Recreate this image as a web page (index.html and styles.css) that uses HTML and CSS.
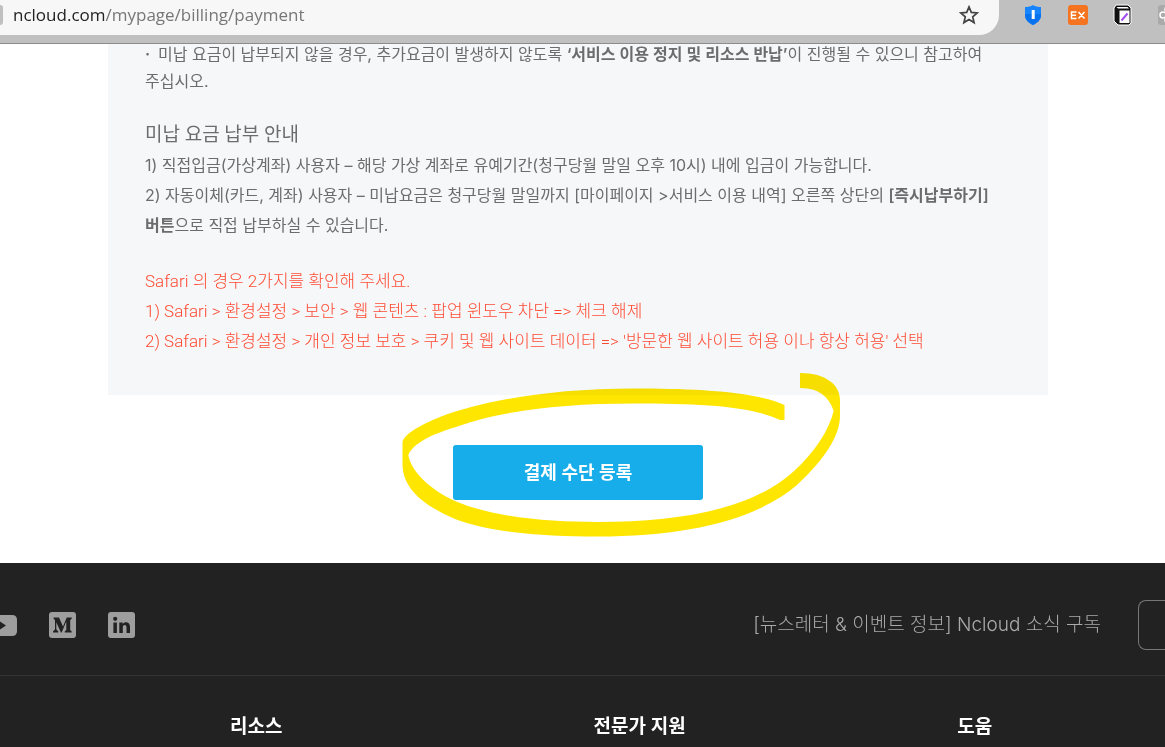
FILE: index.html
```html
<!DOCTYPE html>
<html lang="ko">
<head>
<meta charset="utf-8">
<title>결제 수단 등록</title>
<link rel="stylesheet" href="styles.css">
</head>
<body>
<header class="browser">
  <div class="address">
    <span class="site-info"></span>
    <span class="url">ncloud.com<span class="path">/mypage/billing/payment</span></span>
    <button class="tool star" aria-label="북마크">
      <svg width="20" height="20" viewBox="0 0 20 20" fill="none" stroke="#444" stroke-width="1.7"><path d="M10 1.9l2.300 5.500 5.900.5-4.500 3.900 1.400 5.800-5.100-3.100-5.100 3.100 1.400-5.800-4.500-3.900 5.900-.5z"/></svg>
    </button>
  </div>
  <nav class="extensions">
    <button class="tool" aria-label="보안 확장">
      <svg width="22" height="22" viewBox="0 0 22 22"><path d="M11 1c2 1.400 5 2 8 2v8c0 5-4 8-8 10-4-2-8-5-8-10V3c3 0 6-.6 8-2z" fill="#1683ff"/><path d="M3 10v1c0 5 4 8 8 10 4-2 8-5 8-10v-1z" fill="#0873ee"/><path d="M9.700 6h3v9h-3z" fill="#fff"/></svg>
    </button>
    <button class="tool" aria-label="EX 확장">
      <svg width="22" height="22" viewBox="0 0 22 22"><rect x="1" y="1" width="20" height="20" rx="3" fill="#f47421"/><path d="M9.500 8H4.500v6.500h5M4.500 11.200h4.500M11.500 8l6 6.500M17.500 8l-6 6.500" fill="none" stroke="#fff" stroke-width="1.500"/></svg>
    </button>
    <button class="tool" aria-label="노트 확장">
      <svg width="22" height="22" viewBox="0 0 22 22"><path d="M4 1h12l3 3v15l-2 2H6l-4-4V4z" fill="#111" stroke="#fff"/><path d="M7.500 6.500h10v12.500h-10z" fill="#fff"/><path d="M4.500 3h11l1.500 1.500H6z" fill="#fff"/><path d="M9.500 16.500l6-7" stroke="#a64df0" stroke-width="2"/></svg>
    </button>
    <button class="tool last" aria-label="확장 프로그램">
      <svg width="22" height="22" viewBox="0 0 22 22"><rect x="1" y="1" width="20" height="20" rx="3" fill="#aaa"/><g fill="none" stroke="#fff" stroke-width="1.500"><circle cx="11" cy="5.500" r="3"/><circle cx="6" cy="11" r="3"/><circle cx="11" cy="16" r="3"/><circle cx="16" cy="11" r="3"/></g></svg>
    </button>
  </nav>
</header>

<main>
  <section class="notice">
    <p class="bullet"><span class="dot">·</span>미납 요금이 납부되지 않을 경우, 추가요금이 발생하지 않도록 <b>‘서비스 이용 정지 및 리소스 반납’</b>이 진행될 수 있으니 참고하여<br>주십시오.</p>
    <h2>미납 요금 납부 안내</h2>
    <p>1) 직접입금(가상계좌) 사용자 – 해당 가상 계좌로 유예기간(청구당월 말일 오후 10시) 내에 입금이 가능합니다.</p>
    <p>2) 자동이체(카드, 계좌) 사용자 – 미납요금은 청구당월 말일까지 [마이페이지 &gt;서비스 이용 내역] 오른쪽 상단의 <b>[즉시납부하기]<br>버튼</b>으로 직접 납부하실 수 있습니다.</p>
    <div class="safari">
      <p>Safari 의 경우 2가지를 확인해 주세요.</p>
      <p>1) Safari &gt; 환경설정 &gt; 보안 &gt; 웹 콘텐츠 : 팝업 윈도우 차단 =&gt; 체크 해제</p>
      <p>2) Safari &gt; 환경설정 &gt; 개인 정보 보호 &gt; 쿠키 및 웹 사이트 데이터 =&gt; '방문한 웹 사이트 허용 이나 항상 허용' 선택</p>
    </div>
  </section>
  <section class="action">
    <div class="highlighted">
      <button class="register">결제 수단 등록</button>
      <svg class="marker" width="440" height="166" viewBox="402 373 440 166" aria-hidden="true"><path fill="#ffe600" d="M784.500 405C755 391 690 388.500 635 388.500C545 388.500 480 402 440 417C420 425 402.500 435 402.500 443V464C402.500 492 430 508 455 519C495 534 550 536.500 597 536.500C690 536.500 757 519 797 485C824 460 840 436 840 416V400C840 385 826 373 800 373V388C822 388 830 400 833.700 411C829 430 815 452 793 472C752 509 680 522 597 522C550 522 495 518 455 501C427 488 411 470 408.300 455C415 440 440 432 456.700 426.700C500 411 560 403.500 635 403.500C700 403.500 750 406 780 420H784.500Z"/></svg>
    </div>
  </section>
</main>

<footer class="footer">
  <div class="footer-top">
    <nav class="social">
      <a href="#" aria-label="YouTube"><svg width="17" height="27" viewBox="0 0 17 27"><path d="M0 3h12q5 0 5 5v11q0 5-5 5H0z" fill="#9e9e9e"/><path d="M0 9.500l6 4-6 4z" fill="#222"/></svg></a>
      <a href="#" aria-label="Medium"><svg width="27" height="27" viewBox="0 0 27 27"><rect width="27" height="26" rx="3" fill="#9e9e9e"/><path d="M4.500 5.500h5.500l4 9 3.700-9h5V6.700l-1.500 1.400v10l1.500 1.400v1h-7v-1l1.600-1.400V9.500L12.700 20.500h-.8L7.300 10.300v7l2 2.200v1H4v-1l2-2.200V8.200L4.500 6.500z" fill="#222"/></svg></a>
      <a href="#" aria-label="LinkedIn"><svg width="27" height="27" viewBox="0 0 27 27"><rect width="27" height="26" rx="3" fill="#9e9e9e"/><g fill="#222"><circle cx="7.200" cy="6.800" r="2.100"/><path d="M5.400 10.500h3.500V21H5.400zM11.300 10.500h3.400V12c2-3 7.300-2.200 7.300 2.700V21h-3.500v-5.600c0-3.300-3.700-3-3.700 0V21h-3.500z"/></g></svg></a>
    </nav>
    <span class="newsletter">[뉴스레터 &amp; 이벤트 정보] Ncloud 소식 구독</span>
    <button class="subscribe" aria-label="구독"></button>
  </div>
  <div class="footer-columns">
    <h3>리소스</h3>
    <h3>전문가 지원</h3>
    <h3>도움</h3>
  </div>
</footer>
</body>
</html>
```

FILE: styles.css
```css
* { box-sizing: border-box; }
body {
  margin: 0;
  background: #fff;
  color: #6c6c6c;
  font-family: "Inter", "Noto Sans CJK KR", sans-serif;
  font-size: 16px;
  font-weight: 400;
}
h2, h3, p { margin: 0; }
button { font: inherit; cursor: pointer; }
svg { display: block; }

.browser {
  display: flex;
  height: 44px;
  overflow: hidden;
  background: #c0c0c0;
  border-bottom: 1px solid #8c8c8c;
}
.address {
  display: flex;
  flex: 1;
  align-items: center;
  height: 35px;
  padding: 0 20px 5px 0;
  background: #f7f7f7;
  border-radius: 0 0 20px 0;
}
.site-info {
  width: 3px;
  height: 20px;
  margin-right: 10px;
  background: #c0c0c0;
  border-radius: 0 3px 3px 0;
}
.url {
  flex: 1;
  padding-bottom: 2px;
  color: #222;
  font-family: "Open Sans", "Noto Sans", sans-serif;
  font-size: 17px;
}
.path { color: #777; }
.tool { padding: 0; border: 0; background: none; }
.extensions {
  display: flex;
  gap: 23px;
  width: 166px;
  height: 30px;
  padding-left: 23px;
  overflow: hidden;
  align-items: center;
}
.extensions .tool { flex: none; }

.notice {
  display: flow-root;
  margin: 0 117px 0 108px;
  padding: 0 37px 39px;
  background: #f5f7f9;
  line-height: 30px;
  white-space: nowrap;
}
.bullet { margin-top: -3px; line-height: 27px; }
.bullet + h2 { margin-top: 25px; }
.dot { display: inline-block; width: 13px; font-weight: 600; }
.notice b { font-weight: 600; }
.notice h2 {
  font-family: "Roboto", "Noto Sans CJK KR", sans-serif;
  font-size: 19px;
  font-weight: 400;
}
.safari {
  margin-top: 26px;
  color: #ff4b32;
  font-family: "Roboto", "Noto Sans CJK KR", sans-serif;
  font-size: 17px;
  font-weight: 300;
}

.action {
  display: flex;
  justify-content: center;
  margin: 0 117px 0 108px;
  padding: 50px 0 63px;
}
.highlighted { position: relative; }
.register {
  display: block;
  width: 250px;
  height: 55px;
  padding: 0 0 4px;
  border: 0;
  border-radius: 3px;
  background: #16adea;
  color: #fff;
  font-size: 18px;
  font-weight: 600;
}
.marker {
  position: absolute;
  top: -72px;
  left: -51px;
  mix-blend-mode: multiply;
  pointer-events: none;
}

.footer { background: #222; color: #aaa; }
.footer-top {
  display: flex;
  align-items: center;
  height: 113px;
  padding-top: 12px;
  border-bottom: 1px solid #333;
}
.social { display: flex; flex: 1; gap: 32px; }
.newsletter { padding-bottom: 5px; font-size: 19px; font-weight: 300; }
.subscribe {
  width: 27px;
  height: 50px;
  margin-left: 37px;
  border: 1px solid #777;
  border-right: 0;
  border-radius: 8px 0 0 8px;
  background: none;
}
.footer-columns {
  display: grid;
  grid-template-columns: 7fr 7fr 4fr;
  padding: 37px 0 6px 230px;
}
.footer-columns h3 {
  color: #fff;
  font-size: 19px;
  font-weight: 600;
  line-height: 28px;
}
```
